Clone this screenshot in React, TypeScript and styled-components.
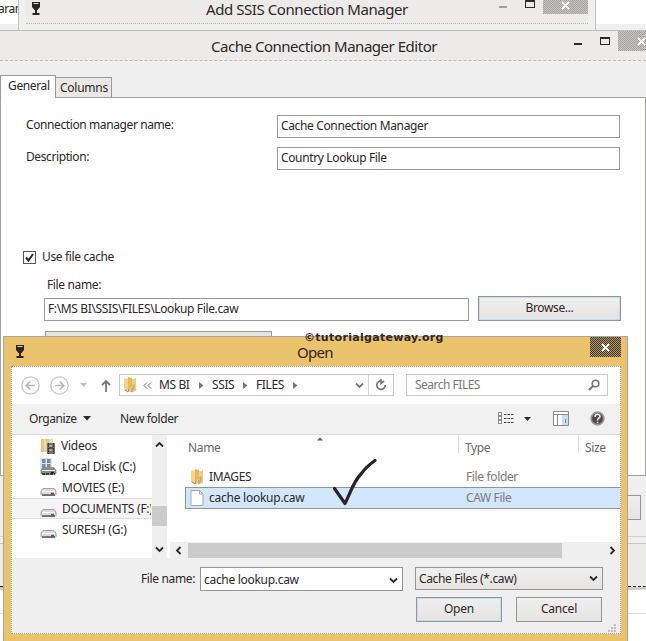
import React from "react";
import styled, { createGlobalStyle } from "styled-components";

const Global = createGlobalStyle`
  *, *::before, *::after { box-sizing: border-box; }
  html, body { margin: 0; padding: 0; }
  body { overflow: hidden; }
`;

const Desktop = styled.div`
  position: relative;
  width: 646px;
  height: 641px;
  overflow: hidden;
  background: #efefef;
  color: #2f2728;
  font: 12px/20px "Noto Sans", "Open Sans", sans-serif;
  white-space: nowrap;
`;

const Label = styled.span<{ $ls?: number; $color?: string }>`
  letter-spacing: ${(p) => p.$ls ?? -0.36}px;
  color: ${(p) => p.$color ?? "inherit"};
`;

const BackText = styled.div`
  height: 24px;
  background: #fefefe;
  line-height: 17px;
  text-indent: -2px;
`;

/* ---- windows on the desktop ---- */
const ManagerWindow = styled.section`
  position: absolute;
  left: 18px;
  top: -8px;
  width: 578px;
  height: 50px;
  background: #efefee;
  border: solid #bdbdbd;
  border-width: 0 1px;
  padding: 8px 7px 0;
`;

const ManagerBar = styled.header`
  display: grid;
  grid-template-columns: 180px 1fr auto;
  height: 24px;
  border-bottom: 1px dotted #b9b7b5;
  background: #ecebea;
`;

const Title = styled.h1<{ $ls?: number }>`
  margin: 0;
  font-size: 15px;
  font-weight: 400;
  line-height: 18px;
  letter-spacing: ${(p) => p.$ls ?? -0.43}px;
`;

const GobletBox = styled.div<{ $x: number; $y: number }>`
  padding: ${(p) => p.$y}px 0 0 ${(p) => p.$x}px;
  line-height: 0;
`;

const Caption = styled.div`
  display: flex;
  align-items: flex-start;
`;

const Minimise = styled.i<{ $color: string }>`
  width: 8px;
  height: 2px;
  background: ${(p) => p.$color};
`;

const Maximise = styled.i`
  width: 10px;
  height: 8px;
  border: 1px solid #2f2728;
  border-top-width: 2px;
`;

const CloseBox = styled.span<{ $w: number; $h: number; $a?: string; $b?: string }>`
  display: flex;
  align-items: center;
  justify-content: center;
  width: ${(p) => p.$w}px;
  height: ${(p) => p.$h}px;
  background: repeating-conic-gradient(${(p) => p.$a ?? "#a5a3a1"} 0 25%, ${(p) => p.$b ?? "#c6c5c4"} 0 50%) 0 0 / 2px 2px;
`;

const ManagerCaption = styled(Caption)`
  gap: 18px;
  ${Minimise} { margin-top: 6px; }
  ${Maximise} { height: 8px; }
  ${CloseBox} { margin-left: -10px; padding-bottom: 4px; }
`;

const EditorWindow = styled.section`
  position: absolute;
  left: 0;
  top: 30px;
  width: 646px;
  height: 611px;
  background: #efefef;
  border-top: 1px solid #bcbcbc;
`;

const EditorBar = styled.header`
  display: grid;
  grid-template-columns: 211px 1fr auto;
  height: 30px;
  border-bottom: 1px dashed #bcbcbc;
  background: #ecebea;
  ${Title} { padding-top: 6px; }
`;

const EditorCaption = styled(Caption)`
  ${Minimise} { margin: 12px 18px 0 0; }
  ${Maximise} { margin: 6px 8px 0 0; }
  ${CloseBox} { padding-left: 18px; overflow: hidden; }
`;

const Tabs = styled.nav`
  display: flex;
  align-items: flex-end;
  height: 37px;
  border-bottom: 1px solid #a3a1a0;
`;

const Tab = styled.div<{ $on?: boolean }>`
  height: ${(p) => (p.$on ? 23 : 20)}px;
  width: 56px;
  margin-bottom: ${(p) => (p.$on ? -1 : 0)}px;
  padding-left: ${(p) => (p.$on ? 7 : 4)}px;
  line-height: 20px;
  border: 1px solid #999;
  border-bottom: 0;
  border-left-width: ${(p) => (p.$on ? 1 : 0)}px;
  background: ${(p) => (p.$on ? "#fefefe" : "#e9e8e6")};
`;

const Panel = styled.div`
  height: 378px;
  border: 1px solid #a3a1a0;
  border-top: 0;
  background: #fefefe;
  padding: 17px 25px 0 25px;
`;

const Field = styled.div`
  display: grid;
  grid-template-columns: 251px 1fr;
  height: 32px;
`;

const TextBox = styled.div<{ $h: number }>`
  height: ${(p) => p.$h}px;
  border: 1px solid #999;
  background: #fefefe;
  padding-left: 3px;
  line-height: ${(p) => p.$h - 3}px;
`;

const CheckRow = styled.div`
  display: flex;
  align-items: center;
  gap: 6px;
  margin: 68px 0 0 -3px;
  height: 20px;
`;

const Indent = styled.div`
  margin-left: 18px;
  padding-top: 8px;
`;

const FileLabel = styled.div`
  padding-left: 3px;
  height: 21px;
`;

const FileLine = styled.div`
  display: grid;
  grid-template-columns: 425px 143px;
  gap: 9px;
  align-items: end;
`;

const Button = styled.div<{ $h: number; $glow?: boolean }>`
  height: ${(p) => p.$h}px;
  line-height: ${(p) => p.$h - 3}px;
  text-align: center;
  border: 1px solid #969594;
  background: linear-gradient(#efefee, #e5e4e2);
  box-shadow: ${(p) => (p.$glow ? "inset 0 0 0 1px #c4ddf3" : "none")};
`;

const HiddenCombo = styled.div`
  width: 227px;
  height: 20px;
  margin: 10px 0 0 1px;
  border: 1px solid #999;
  background: #e4e4e3;
`;

const EditorFooter = styled.div`
  display: flex;
  justify-content: flex-end;
  height: 61px;
  padding: 19px 5px 0;
  border-bottom: 1px solid #cfcfcf;
  ${Button} { width: 80px; }
`;

const Ledge = styled.div`
  height: 7px;
  border-bottom: 1px solid #c5c5c5;
`;

const Shelf = styled.div`
  height: 43px;
  background: #ebebea;
  border-bottom: 1px dashed #222;
`;

const Below = styled.div`
  height: 60px;
  background: #fefefe;
  border-top: 3px solid #cfcecd;
`;

const BelowRule = styled.div`
  height: 24px;
  border-bottom: 1px solid #dedede;
`;

/* ---- open file dialog ---- */
const Dialog = styled.section`
  position: absolute;
  left: 3px;
  top: 336px;
  width: 625px;
  height: 320px;
  border: 1px solid #a9a5a0;
  background: #ecc36d;
  padding: 0 7px;
`;

const DialogBar = styled.header`
  display: grid;
  grid-template-columns: 286px 1fr 31px;
  height: 29px;
  margin-right: -1px;
  ${Title} { padding-top: 6px; }
`;

const Client = styled.div`
  width: 610px;
  height: 268px;
  border: 1px dotted #a99f92;
  background: #fefefe;
  overflow: hidden;
`;

const AddressRow = styled.div`
  display: flex;
  align-items: center;
  height: 37px;
  padding: 0 0 1px 9px;
  svg { flex: none; display: block; }
`;

const AddressBox = styled.div`
  display: flex;
  align-items: center;
  width: 275px;
  height: 22px;
  margin-left: 8px;
  border: 1px solid #c9c8c7;
  padding-left: 3px;
`;

const Crumb = styled.span<{ $w: number }>`
  width: ${(p) => p.$w}px;
  letter-spacing: -0.4px;
`;

const Refresh = styled.span`
  display: flex;
  align-items: center;
  justify-content: center;
  width: 25px;
  height: 20px;
  margin-left: auto;
  border-left: 1px solid #d5d4d3;
`;

const SearchBox = styled.div`
  display: flex;
  align-items: center;
  justify-content: space-between;
  width: 202px;
  height: 22px;
  margin-left: 12px;
  padding: 0 7px 0 8px;
  border: 1px solid #c9c8c7;
  color: #7d7776;
`;

const Toolbar = styled.div`
  display: flex;
  align-items: center;
  height: 31px;
  padding: 0 0 1px 17px;
  background: #f1f1f1;
  border-bottom: 1px solid #dddcdb;
  svg { flex: none; }
`;

const ToolItem = styled.span<{ $w: number }>`
  display: flex;
  align-items: center;
  gap: 6px;
  width: ${(p) => p.$w}px;
`;

const Browser = styled.div`
  display: grid;
  grid-template-columns: 140px 15px 3px 1fr;
  height: 123px;
`;

const DriveList = styled.div`
  overflow: hidden;
`;

const Drive = styled.div<{ $on?: boolean }>`
  display: flex;
  align-items: center;
  height: 21px;
  padding-left: 28px;
  gap: 5px;
  background: ${(p) => (p.$on ? "#f5f5f5" : "transparent")};
  box-shadow: ${(p) => (p.$on ? "inset 0 1px #dedede, inset 0 -1px #dedede" : "none")};
  svg { flex: none; }
  ${Label} { width: 89px; overflow: hidden; }
`;

const VScroll = styled.div`
  display: flex;
  flex-direction: column;
  align-items: center;
  padding: 5px 0 4px;
  background: #efefef;
`;

const VThumb = styled.i`
  width: 15px;
  height: 20px;
  margin: 57px 0 auto;
  background: #cbcbcb;
`;

const Files = styled.div`
  display: flex;
  flex-direction: column;
  min-width: 0;
`;

const HeaderRow = styled.div`
  display: grid;
  grid-template-columns: 288px 120px 1fr;
  height: 32px;
  color: #6d6766;
`;

const HeaderCell = styled.div<{ $first?: boolean }>`
  position: relative;
  height: ${(p) => (p.$first ? 26 : 18)}px;
  line-height: 25px;
  padding-left: ${(p) => (p.$first ? 18 : 6)}px;
  border-left: ${(p) => (p.$first ? 0 : 1)}px solid #dddcdc;
`;

const SortMark = styled.svg`
  position: absolute;
  left: 146px;
  top: 1px;
`;

const FileRow = styled.div<{ $on?: boolean }>`
  display: grid;
  grid-template-columns: 4px 19px 257px 1fr;
  align-items: center;
  height: ${(p) => (p.$on ? 22 : 20)}px;
  margin-left: 15px;
  border: solid #929394;
  border-width: ${(p) => (p.$on ? "1px 0 1px 1px" : "0 0 0 1px")};
  border-left-color: ${(p) => (p.$on ? "#929394" : "transparent")};
  background: ${(p) => (p.$on ? "#d2e7fc" : "transparent")};
  svg { grid-column: 2; }
`;

const HScroll = styled.div`
  display: flex;
  align-items: center;
  height: 16px;
  margin-top: auto;
  padding: 0 3px 0 4px;
  background: #efefef;
`;

const HThumb = styled.i`
  width: 374px;
  height: 15px;
  margin: 0 auto 0 5px;
  background: #cbcbcb;
`;

const DialogFooter = styled.footer`
  height: 76px;
  background: #efefef;
  padding: 9px 2px 0 129px;
`;

const FooterLine = styled.div`
  display: grid;
  grid-template-columns: 59px 203px 200px;
  align-items: start;
  > ${Label} { line-height: 23px; }
`;

const Combo = styled.div<{ $flat?: boolean }>`
  display: flex;
  align-items: center;
  justify-content: space-between;
  height: ${(p) => (p.$flat ? 23 : 24)}px;
  margin-left: ${(p) => (p.$flat ? 12 : 0)}px;
  padding: ${(p) => (p.$flat ? 0 : 2)}px 4px 0 3px;
  border: 1px solid #969594;
  background: ${(p) => (p.$flat ? "linear-gradient(#efefee, #e5e4e2)" : "#fefefe")};
`;

const FooterButtons = styled.div`
  display: grid;
  grid-template-columns: 86px 86px;
  gap: 14px;
  margin: 6px 0 0 275px;
`;

const Grip = styled.div`
  display: flex;
  justify-content: flex-end;
  line-height: 0;
  padding: 2px 1px 0 0;
`;

const Watermark = styled.div`
  position: absolute;
  left: 304px;
  top: 330px;
  font: bold 11px/15px "DejaVu Sans", sans-serif;
  letter-spacing: 0.3px;
`;

const TickMark = styled.svg`
  position: absolute;
  left: 330px;
  top: 456px;
`;

/* ---- drawings ---- */
const Goblet = () => (
  <svg width="10" height="14" viewBox="0 0 10 14">
    <path d="M1 0h8v5L6.5 8H6v3h2.5v2h-7v-2H4V8h-.5L1 5z" fill="#2b2324" />
    <path d="M2.5 1.5h5" stroke="#d8d4d0" />
  </svg>
);

const Cross = () => (
  <svg width="9" height="9" viewBox="0 0 9 9">
    <path d="M1 1l7 7M8 1L1 8" stroke="#fff" strokeWidth="1.8" />
  </svg>
);

const Chevron = ({ dir, color = "#2f2728" }: { dir: "up" | "down" | "left" | "right"; color?: string }) => {
  const d = { up: "M1 6.5L4.5 3 8 6.5", down: "M1 2.5L4.5 6 8 2.5", left: "M6.5 1L3 4.5 6.5 8", right: "M2.5 1L6 4.5 2.5 8" }[dir];
  return (
    <svg width="9" height="9" viewBox="0 0 9 9">
      <path d={d} fill="none" stroke={color} strokeWidth="1.8" />
    </svg>
  );
};

const NavArrow = ({ flip }: { flip?: boolean }) => (
  <svg width="19" height="19" viewBox="0 0 19 19">
    <circle cx="9.5" cy="9.5" r="8.7" fill="none" stroke="#c6c5c4" strokeWidth="1.3" />
    <path d={flip ? "M5 9.5h8.5M9.8 5.5l4 4-4 4" : "M14 9.5H5.5M9.2 5.5l-4 4 4 4"} fill="none" stroke="#b9b8b7" strokeWidth="1.7" />
  </svg>
);

const UpArrow = () => (
  <svg width="10" height="13" viewBox="0 0 10 13">
    <path d="M5 13V2M1 6l4-4 4 4" fill="none" stroke="#777" strokeWidth="1.8" />
  </svg>
);

const Triangle = ({ color = "#2f2728", w = 8 }: { color?: string; w?: number }) => (
  <svg width={w} height={w / 2 + 0.5} viewBox="0 0 8 4.5">
    <path d="M0 0h8L4 4.5z" fill={color} />
  </svg>
);

const Folder = () => (
  <svg width="14" height="16" viewBox="0 0 14 16">
    <path d="M1 1.5h4v13l-4-1z" fill="#f0d592" />
    <path d="M5 0l4 1v9l-4 4z" fill="#e8b94f" />
    <path d="M9 2h4v12l-4 1.5-4-1 4-5z" fill="#efcf85" />
    <path d="M2 13l3 2 1-3M9 15V11" stroke="#9b8a78" fill="none" />
    <path d="M12.500 1v12.500" stroke="#d2cdc3" />
    <path d="M9.500 8l2-1v5l-2 2z" fill="#e0aa39" />
  </svg>
);

const VideoFolder = () => (
  <svg width="16" height="16" viewBox="0 0 16 16">
    <path d="M1 1h12v13H1z" fill="#dedbd2" />
    <path d="M1 1h3v13H1zM6 1h3v13H6z" fill="#e9c570" />
    <path d="M7 5h8v11H7z" fill="#77736f" />
    <path d="M8.500 5v11M13.500 5v11" stroke="#332d2c" strokeDasharray="1.5 1" />
    <path d="M9.500 8H12M9.500 12H12" stroke="#c6c4c2" strokeWidth="1.5" />
    <path d="M9 10h4" stroke="#332d2c" />
  </svg>
);

const DriveIcon = ({ system }: { system?: boolean }) => (
  <svg width="17" height="18" viewBox="0 0 17 18">
    {system && (
      <>
        <path d="M0 0h12v11H0z" fill="#cfe3f6" />
        <path d="M2 1h3.5v4H2zM7 1h3.5v4H7zM2 6h3.5v4H2zM7 6h3.500v4H7z" fill="#7f8891" />
      </>
    )}
    <path d="M3 9.500h11l2 2.500v3.500l-1 1H2l-1-1V12z" fill={system ? "#8b8987" : "#dddcda"} stroke="#8d8b89" strokeWidth=".8" />
    <path d="M2 12.500h13" stroke="#fff" />
    <path d="M2 16h13M11 14.500h3" stroke={system ? "#272122" : "#605c5a"} strokeWidth="1.5" strokeDasharray={system ? "3 1" : "none"} />
  </svg>
);

const PageIcon = () => (
  <svg width="14" height="16" viewBox="0 0 14 16">
    <path d="M1 .5h8.5L13 4v11.5H1z" fill="#fefefe" stroke="#aaa9a8" />
    <path d="M9.5.5V4H13" fill="none" stroke="#aaa9a8" />
  </svg>
);

const Views = () => (
  <svg width="16" height="13" viewBox="0 0 16 13">
    {[1, 5, 9].map((y) => (
      <g key={y}>
        <rect x=".5" y={y - 0.5} width="3" height="3" fill="#fff" stroke="#8b8987" />
        <path d={`M6 ${y + 1.5}h10`} stroke="#494343" strokeDasharray="2.5 1" />
      </g>
    ))}
  </svg>
);

const PreviewPane = () => (
  <svg width="16" height="15" viewBox="0 0 16 15">
    <path d="M.5.5h15v14H.5zM.5 3.5h15M4.5 3.5v11M9.5 3.5v11" fill="#fbfbfb" stroke="#8b8987" />
    <path d="M9 4h6v10H9z" fill="#c5def4" />
    <path d="M12.5 8v4" stroke="#7f8891" />
  </svg>
);

const Help = () => (
  <svg width="15" height="15" viewBox="0 0 15 15">
    <circle cx="7.5" cy="7.5" r="6.3" fill="#4e4847" stroke="#999795" strokeWidth="1.8" />
    <path d="M5 6c0-3.5 5-3.5 5-.5C10 7.5 7.5 7 7.5 9.500M7.5 10.8v1.5" fill="none" stroke="#f2f2f2" strokeWidth="1.5" />
  </svg>
);

const drives = [
  { name: "Videos", icon: <VideoFolder /> },
  { name: "Local Disk (C:)", icon: <DriveIcon system /> },
  { name: "MOVIES (E:)", icon: <DriveIcon /> },
  { name: "DOCUMENTS (F:)", icon: <DriveIcon />, on: true },
  { name: "SURESH (G:)", icon: <DriveIcon /> },
];

const CrumbArrow = () => (
  <svg width="5" height="7" viewBox="0 0 5 7">
    <path d="M0 0l4.5 3.5L0 7z" fill="#7b7776" />
  </svg>
);

export default function App() {
  return (
    <Desktop>
      <Global />
      <BackText>
        <Label $ls={-0.5}>aram</Label>
      </BackText>

      <ManagerWindow>
        <ManagerBar>
          <GobletBox $x={5} $y={2}><Goblet /></GobletBox>
          <Title>Add SSIS Connection Manager</Title>
          <ManagerCaption>
            <Minimise $color="#a3a1a0" />
            <Maximise />
            <CloseBox $w={45} $h={14}><Cross /></CloseBox>
          </ManagerCaption>
        </ManagerBar>
      </ManagerWindow>

      <EditorWindow>
        <EditorBar>
          <span />
          <Title $ls={-0.47}>Cache Connection Manager Editor</Title>
          <EditorCaption>
            <Minimise $color="#2f2728" />
            <Maximise />
            <CloseBox $w={28} $h={20}><Cross /></CloseBox>
          </EditorCaption>
        </EditorBar>
        <Tabs>
          <Tab $on><Label>General</Label></Tab>
          <Tab><Label $ls={-0.25}>Columns</Label></Tab>
        </Tabs>
        <Panel>
          <Field>
            <Label $ls={-0.4}>Connection manager name:</Label>
            <TextBox $h={23}><Label>Cache Connection Manager</Label></TextBox>
          </Field>
          <Field>
            <Label $ls={-0.4}>Description:</Label>
            <TextBox $h={23}><Label>Country Lookup File</Label></TextBox>
          </Field>
          <CheckRow>
            <svg width="13" height="13" viewBox="0 0 13 13">
              <rect x=".5" y=".5" width="12" height="12" fill="#fefefe" stroke="#5b5554" />
              <path d="M3 6.5l2.5 3L10 3" fill="none" stroke="#2f2728" strokeWidth="2" />
            </svg>
            <Label>Use file cache</Label>
          </CheckRow>
          <Indent>
            <FileLabel><Label>File name:</Label></FileLabel>
            <FileLine>
              <TextBox $h={23}><Label>F:\MS BI\SSIS\FILES\Lookup File.caw</Label></TextBox>
              <Button $h={25} $glow><Label>Browse...</Label></Button>
            </FileLine>
            <HiddenCombo />
          </Indent>
        </Panel>
        <EditorFooter><Button $h={25} /></EditorFooter>
        <Ledge />
        <Shelf />
        <Below><BelowRule /></Below>
      </EditorWindow>

      <Dialog>
        <DialogBar>
          <GobletBox $x={4} $y={8}><Goblet /></GobletBox>
          <Title $ls={-0.7}>Open</Title>
          <CloseBox $w={31} $h={20} $a="#3d3532" $b="#b69a61"><Cross /></CloseBox>
        </DialogBar>
        <Client>
          <AddressRow>
            <NavArrow />
            <ToolItem $w={10} />
            <NavArrow flip />
            <ToolItem $w={11} />
            <Triangle color="#c2c1c0" w={7} />
            <ToolItem $w={14} />
            <UpArrow />
            <AddressBox>
              <Folder />
              <ToolItem $w={6} />
              <svg width="9" height="7" viewBox="0 0 9 7">
                <path d="M4 .5l-3 3 3 3M8 .5l-3 3 3 3" fill="none" stroke="#6d6766" />
              </svg>
              <ToolItem $w={7} />
              <Crumb $w={40}>MS BI</Crumb><CrumbArrow />
              <ToolItem $w={8} />
              <Crumb $w={31}>SSIS</Crumb><CrumbArrow />
              <ToolItem $w={8} />
              <Crumb $w={37}>FILES</Crumb><CrumbArrow />
              <ToolItem $w={57} />
              <Chevron dir="down" color="#7b7776" />
              <Refresh>
                <svg width="12" height="12" viewBox="0 0 12 12">
                  <path d="M6.5 2A4.2 4.2 0 1 0 10.2 6M6 0v4.5L9 2" fill="none" stroke="#7b7776" strokeWidth="1.7" />
                </svg>
              </Refresh>
            </AddressBox>
            <SearchBox>
              <Label $ls={-0.5}>Search FILES</Label>
              <svg width="12" height="12" viewBox="0 0 12 12">
                <circle cx="7.5" cy="4.5" r="3.3" fill="none" stroke="#7b7776" strokeWidth="1.6" />
                <path d="M5 7L1 11" stroke="#7b7776" strokeWidth="2" />
              </svg>
            </SearchBox>
          </AddressRow>
          <Toolbar>
            <ToolItem $w={91}><Label $ls={-0.45}>Organize</Label><Triangle /></ToolItem>
            <ToolItem $w={378}><Label>New folder</Label></ToolItem>
            <ToolItem $w={26}><Views /></ToolItem>
            <ToolItem $w={29}><Triangle w={7} /></ToolItem>
            <ToolItem $w={37}><PreviewPane /></ToolItem>
            <Help />
          </Toolbar>
          <Browser>
            <DriveList>
              {drives.map((d) => (
                <Drive key={d.name} $on={d.on}>{d.icon}<Label $ls={-0.25}>{d.name}</Label></Drive>
              ))}
            </DriveList>
            <VScroll><Chevron dir="up" /><VThumb /><Chevron dir="down" /></VScroll>
            <span />
            <Files>
              <HeaderRow>
                <HeaderCell $first>
                  <Label>Name</Label>
                  <SortMark width="8" height="5" viewBox="0 0 8 5"><path d="M1 4.5l3-3 3 3z" fill="#5b5554" /></SortMark>
                </HeaderCell>
                <HeaderCell><Label>Type</Label></HeaderCell>
                <HeaderCell><Label>Size</Label></HeaderCell>
              </HeaderRow>
              <FileRow><Folder /><Label>IMAGES</Label><Label $color="#7d7776">File folder</Label></FileRow>
              <FileRow $on><PageIcon /><Label $ls={-0.25}>cache lookup.caw</Label><Label $color="#7d7776">CAW File</Label></FileRow>
              <HScroll><Chevron dir="left" /><HThumb /><Chevron dir="right" /></HScroll>
            </Files>
          </Browser>
          <DialogFooter>
            <FooterLine>
              <Label>File name:</Label>
              <Combo><Label $ls={-0.3}>cache lookup.caw</Label><Chevron dir="down" /></Combo>
              <Combo $flat><Label>Cache Files (*.caw)</Label><Chevron dir="down" /></Combo>
            </FooterLine>
            <FooterButtons>
              <Button $h={25} $glow><Label $ls={-0.2}>Open</Label></Button>
              <Button $h={25}><Label $ls={-0.2}>Cancel</Label></Button>
            </FooterButtons>
            <Grip>
              <svg width="9" height="9" viewBox="0 0 9 9">
                <path d="M6 0h2v2H6zM3 3h2v2H3zM6 3h2v2H6zM0 6h2v2H0zM3 6h2v2H3zM6 6h2v2H6z" fill="#bfbfbf" />
              </svg>
            </Grip>
          </DialogFooter>
        </Client>
      </Dialog>

      <Watermark>©tutorialgateway.org</Watermark>
      <TickMark width="50" height="52" viewBox="0 0 50 52">
        <path d="M4.5 32.5L15 47.5C21 36 23 26 31 18C36 11 40 8 45 4.5" fill="none" stroke="#2b2324" strokeWidth="3.2" strokeLinecap="round" strokeLinejoin="round" />
      </TickMark>
    </Desktop>
  );
}
